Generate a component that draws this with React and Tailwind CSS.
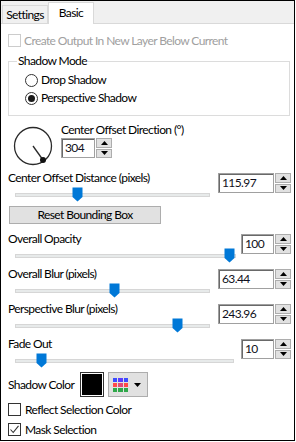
import React from "react";

const font = { fontFamily: "Lato, 'Liberation Sans', sans-serif" };

function Arrow({ up }) {
  return (
    <svg width="7" height="4" viewBox="0 0 7 4">
      <path d={up ? "M3.5 0 L7 4 H0 Z" : "M0 0 H7 L3.5 4 Z"} fill="#000" />
    </svg>
  );
}

function Spin({ value, boxW }) {
  return (
    <div className="flex h-[20px] gap-[1px]">
      <div
        className={`${boxW} h-full border border-[#a0a0a0] shadow-[inset_1px_1px_0_#696969] bg-white flex items-center pl-[3px] text-[12px] text-[#101020]`}
      >
        {value}
      </div>
      <div className="flex flex-col w-[16px] gap-[1px]">
        <div className="flex-1 bg-[#e1e1e1] border border-[#adadad] flex items-center justify-center">
          <Arrow up />
        </div>
        <div className="flex-1 bg-[#e1e1e1] border border-[#adadad] flex items-center justify-center">
          <Arrow />
        </div>
      </div>
    </div>
  );
}

function Thumb() {
  return (
    <svg width="11" height="15" viewBox="0 0 11 15">
      <path d="M0.5 0.5 H10.5 V10 L5.5 14.5 L0.5 10 Z" fill="#0078d7" />
    </svg>
  );
}

function SliderBlock({ label, value, trackW, thumbLeft, boxW, className = "" }) {
  return (
    <div className={`flex justify-between items-start ${className}`}>
      <div className="flex flex-col">
        <div className="h-[14px] leading-[14px] text-[12px] whitespace-nowrap">{label}</div>
        <div className={`relative mt-[2px] ml-[7px] h-[15px] ${trackW}`}>
          <div className="absolute left-0 right-0 top-[6px] h-[4px] bg-[#e7eaea] border border-[#d6d6d6]" />
          <div className={`absolute top-0 ${thumbLeft}`}>
            <Thumb />
          </div>
        </div>
      </div>
      <div className="mt-[2px]">
        <Spin value={value} boxW={boxW} />
      </div>
    </div>
  );
}

function Check({ checked, disabled }) {
  return (
    <div
      className={`w-[13px] h-[13px] shrink-0 border bg-white flex items-center justify-center ${
        disabled ? "border-[#cccccc]" : "border-[#333333]"
      }`}
    >
      {checked && (
        <svg width="11" height="11" viewBox="0 0 11 11">
          <path d="M1.5 5.5 L4.2 8.5 L9.5 1.8" fill="none" stroke="#333" strokeWidth="1.1" />
        </svg>
      )}
    </div>
  );
}

function Radio({ checked }) {
  return (
    <div className="w-[13px] h-[13px] shrink-0 rounded-full border border-[#333333] bg-white flex items-center justify-center">
      {checked && <div className="w-[7px] h-[7px] rounded-full bg-[#1a1a1a]" />}
    </div>
  );
}

export default function App() {
  const grid = [
    "#3b4cff", "#5a3cff", "#3b4cff",
    "#ff4a4a", "#e04a7a", "#ff4a4a",
    "#2fa84a", "#2fa84a", "#2fa84a",
  ];
  return (
    <div className="w-[296px] h-[442px] bg-white text-black tracking-[-0.6px]" style={font}>
      <div className="w-[295px] h-[441px] border border-black flex flex-col">
        <div className="h-[22px] bg-[#f0f0f0] flex items-end pl-[1px] shrink-0">
          <div className="w-[46px] h-[18px] border border-b-0 border-[#d9d9d9] bg-[#f0f0f0] flex items-center justify-center text-[12px]">
            Settings
          </div>
          <div className="relative z-10 -mb-[1px] w-[46px] h-[22px] border border-b-0 border-[#d9d9d9] bg-white flex items-center justify-center text-[12px] pb-[1px]">
            Basic
          </div>
        </div>
        <div className="flex-1 border-t border-[#d9d9d9] bg-white pl-[7px] pr-[3px] flex flex-col">
          <div className="mt-[10px] h-[13px] flex items-center gap-[3px]">
            <Check disabled />
            <span className="text-[12px] text-[#a0a0a0] leading-none whitespace-nowrap">
              Create Output In New Layer Below Current
            </span>
          </div>

          <div className="relative mt-[14px] w-[282px] h-[55px] border border-[#dcdcdc] pt-[11px] pl-[16px] flex flex-col gap-[4px]">
            <span className="absolute -top-[8px] left-[8px] px-[1px] bg-white text-[12px] leading-[14px]">
              Shadow Mode
            </span>
            <div className="h-[14px] flex items-center gap-[3px] text-[12px]">
              <Radio />
              <span>Drop Shadow</span>
            </div>
            <div className="h-[14px] flex items-center gap-[3px] text-[12px]">
              <Radio checked />
              <span>Perspective Shadow</span>
            </div>
          </div>

          <div className="mt-[7px] flex">
            <svg width="40" height="40" viewBox="0 0 40 40" className="ml-[5px] mt-[3px]">
              <circle cx="20" cy="20" r="18.5" fill="none" stroke="#2a2a2a" strokeWidth="1.3" />
              <line x1="20" y1="20" x2="30" y2="34" stroke="#2a2a2a" strokeWidth="1.3" />
              <circle cx="30" cy="34" r="3" fill="#111" />
            </svg>
            <div className="ml-[8px] flex flex-col">
              <div className="h-[14px] leading-[14px] text-[12px] whitespace-nowrap">Center Offset Direction (°)</div>
              <div className="mt-[1px]">
                <Spin value="304" boxW="w-[34px]" />
              </div>
            </div>
          </div>

          <SliderBlock
            className="mt-[5px]"
            label="Center Offset Distance (pixels)"
            value="115.97"
            trackW="w-[195px]"
            thumbLeft="left-[57px]"
            boxW="w-[56px]"
          />

          <button className="mt-[4px] ml-[1px] w-[152px] h-[18px] bg-[#e1e1e1] border border-[#adadad] text-[12px] flex items-center justify-center">
            Reset Bounding Box
          </button>

          <SliderBlock
            className="mt-[8px]"
            label="Overall Opacity"
            value="100"
            trackW="w-[221px]"
            thumbLeft="left-[209px]"
            boxW="w-[33px]"
          />
          <SliderBlock
            className="mt-[4px]"
            label="Overall Blur (pixels)"
            value="63.44"
            trackW="w-[195px]"
            thumbLeft="left-[94px]"
            boxW="w-[56px]"
          />
          <SliderBlock
            className="mt-[4px]"
            label="Perspective Blur (pixels)"
            value="243.96"
            trackW="w-[195px]"
            thumbLeft="left-[157px]"
            boxW="w-[56px]"
          />
          <SliderBlock
            className="mt-[4px]"
            label="Fade Out"
            value="10"
            trackW="w-[219px]"
            thumbLeft="left-[21px]"
            boxW="w-[33px]"
          />

          <div className="mt-[4px] h-[25px] flex items-center">
            <span className="w-[72px] text-[12px] whitespace-nowrap">Shadow Color</span>
            <div className="w-[24px] h-[25px] border border-[#333] p-[1px] bg-white">
              <div className="w-full h-full bg-black" />
            </div>
            <div className="ml-[4px] w-[40px] h-[25px] bg-[#e1e1e1] border border-[#adadad] flex items-center pl-[4px] gap-[6px]">
              <div className="grid grid-cols-3 gap-[1px] w-[15px]">
                {grid.map((c, i) => (
                  <div key={i} className="h-[4px]" style={{ backgroundColor: c }} />
                ))}
              </div>
              <svg width="7" height="4" viewBox="0 0 7 4">
                <path d="M0 0 H7 L3.5 4 Z" fill="#000" />
              </svg>
            </div>
          </div>

          <div className="mt-[6px] h-[13px] flex items-center gap-[4px] text-[12px]">
            <Check />
            <span>Reflect Selection Color</span>
          </div>
          <div className="mt-[7px] h-[13px] flex items-center gap-[4px] text-[12px]">
            <Check checked />
            <span>Mask Selection</span>
          </div>
        </div>
      </div>
    </div>
  );
}
